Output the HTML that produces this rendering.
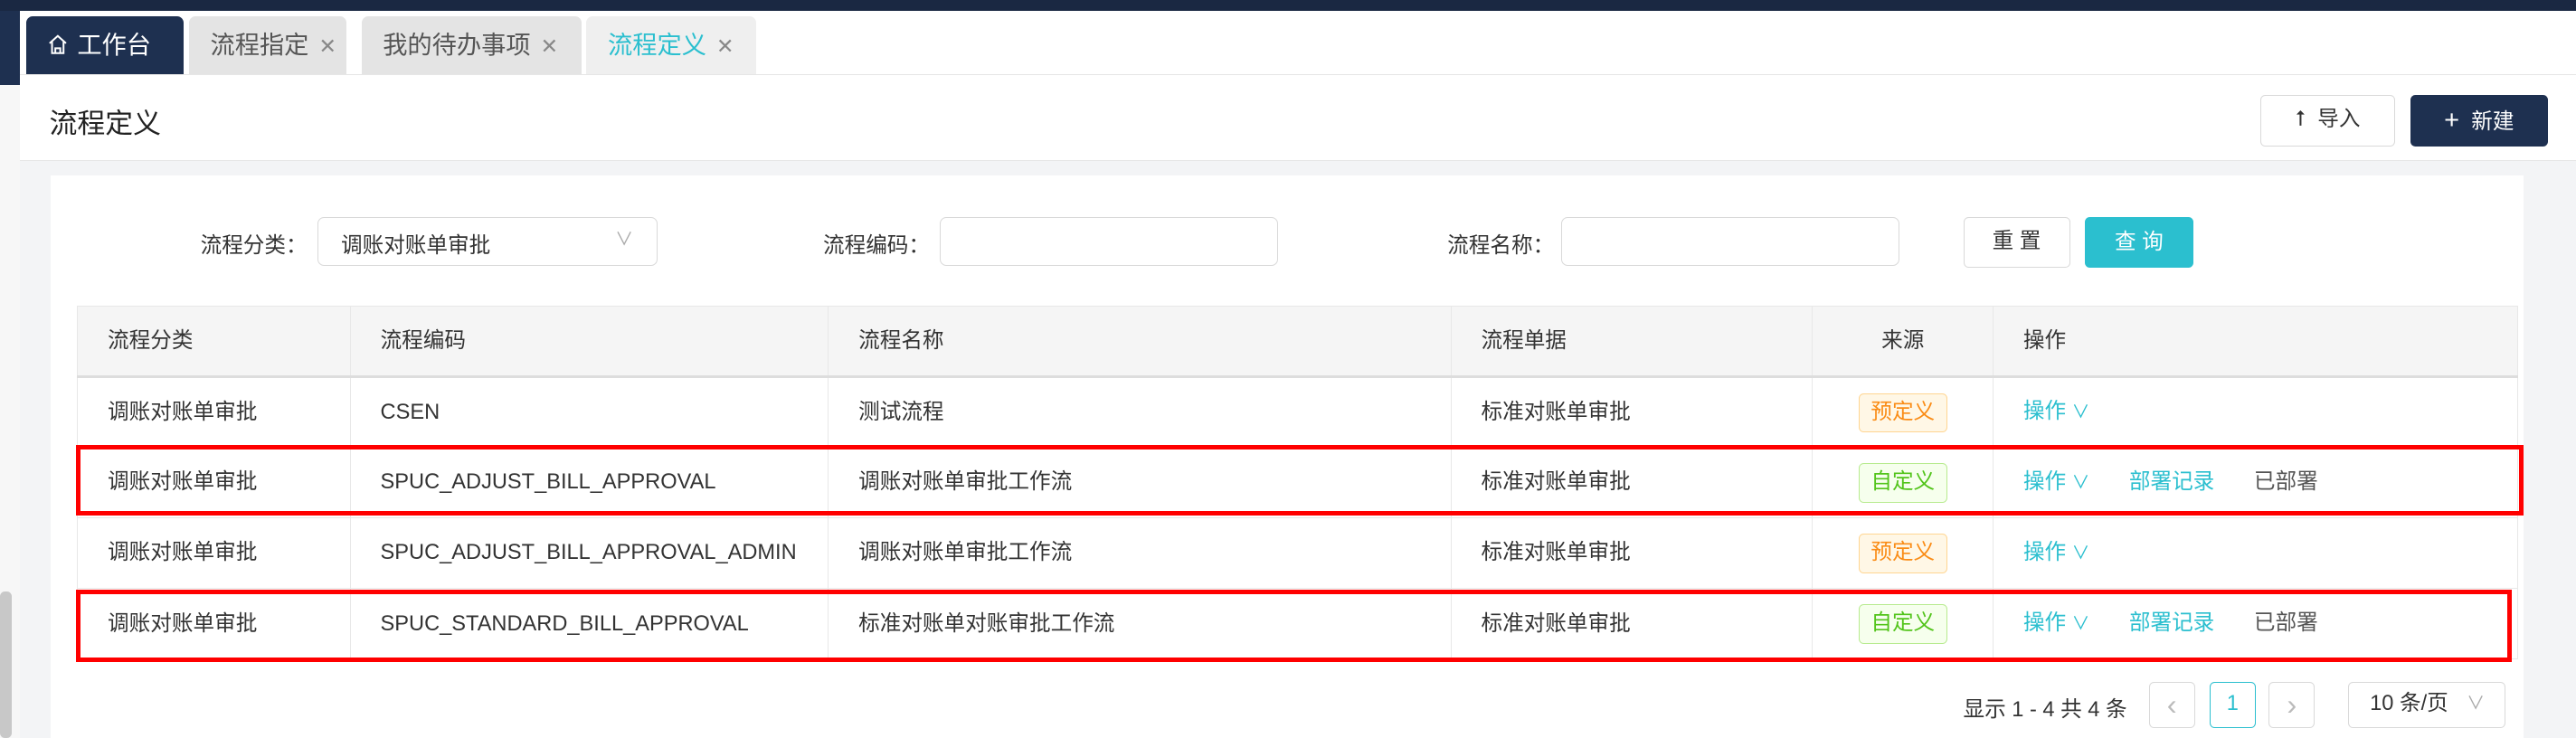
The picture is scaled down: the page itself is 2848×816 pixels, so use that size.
<!DOCTYPE html>
<html><head><meta charset="utf-8"><style>
*{box-sizing:border-box;margin:0;padding:0}
html,body{width:2848px;height:816px;overflow:hidden;background:#f3f4f6}
#w{zoom:1.81633;width:1568px;height:449.3px;position:relative;font-family:"Liberation Sans","Noto Sans CJK SC",sans-serif;font-size:13px;color:#333;background:#f3f4f6}
.a{position:absolute}
.tab{position:absolute;top:10px;height:35px;background:#e4e4e4;border-radius:4px 4px 0 0;font-size:15px;color:#555;line-height:35px;padding-left:13px}
.tab i{font-style:normal;color:#888;font-size:13px;margin-left:6px}
.btn{position:absolute;border:1px solid #d9d9d9;border-radius:3px;background:#fff;text-align:center;font-size:13px}
.lbl{position:absolute;top:139px;text-align:right;width:120px}
.inp{position:absolute;top:132px;height:30px;border:1px solid #d9d9d9;border-radius:4px;background:#fff}
table{position:absolute;left:47px;top:186px;width:1486px;border-collapse:collapse}
td,th{border:1px solid #e8e8e8;height:43px;line-height:41px;text-align:left;padding:0 0 0 18px;font-weight:normal;white-space:nowrap;vertical-align:middle}
th{background:#f5f5f5;border-bottom:2px solid #ddd}
.c{text-align:center;padding-left:0}
.tag{display:inline-block;border:1px solid;border-radius:3px;padding:0 7px;line-height:23px;font-size:13px;vertical-align:middle}
.pre{color:#fa8c16;background:#fff7e6;border-color:#ffd591}
.cus{color:#52c41a;background:#f6ffed;border-color:#b7eb8f}
.op{color:#2bbfcf}
.gr{color:#555}
.red{position:absolute;border:3px solid #f00}
.pg{position:absolute;top:415px;height:28px;border:1px solid #d9d9d9;border-radius:3px;background:#fff;text-align:center;line-height:26px;color:#bbb}
</style></head><body><div id="w">
<div class="a" style="left:0;top:0;width:1568px;height:6.5px;background:#1a2842"></div>
<div class="a" style="left:0;top:6.5px;width:12px;height:46px;background:#1e3050"></div>
<div class="a" style="left:0;top:52px;width:12px;height:400px;background:#f7f7f7"></div>
<div class="a" style="left:12px;top:6.5px;width:1556px;height:39px;background:#fff"></div>
<div class="tab" style="left:16px;width:96px;background:#1e3050;color:#fff"><svg width="12" height="13" viewBox="0 0 12 13" style="vertical-align:-1px;margin-right:6px"><path d="M1 6L6 1.5L11 6M2.5 5V12H9.5V5M4.5 12V9H7.5V12" fill="none" stroke="#fff" stroke-width="1.1"/></svg>工作台</div>
<div class="tab" style="left:115px;width:96px">流程指定<i>✕</i></div>
<div class="tab" style="left:220px;width:134px">我的待办事项<i>✕</i></div>
<div class="tab" style="left:357px;width:103px;background:#efefef;color:#2bbfcf">流程定义<i>✕</i></div>
<div class="a" style="left:12px;top:45px;width:1556px;height:53px;background:#fff;border-top:1px solid #e6e6e6;border-bottom:1px solid #e6e6e6"></div>
<div class="a" style="left:30px;top:61px;font-size:17px;color:#222">流程定义</div>
<div class="btn" style="left:1376px;top:58px;width:82px;height:31px;line-height:29px;color:#333"><span style="font-size:13px">⭡</span>&nbsp; 导入</div>
<div class="btn" style="left:1467px;top:58px;width:84px;height:31px;line-height:31px;background:#1e3050;border:none;color:#fff"><span style="font-size:16px">+</span>&nbsp; 新建</div>
<div class="a" style="left:31px;top:107px;width:1505px;height:345px;background:#fff"></div>
<div class="lbl" style="left:67px">流程分类：</div>
<div class="inp" style="left:193px;width:207px;padding:6px 14px">调账对账单审批<span style="position:absolute;right:14px;top:4px;color:#aaa;font-size:11px">∨</span></div>
<div class="lbl" style="left:446px">流程编码：</div>
<div class="inp" style="left:572px;width:206px"></div>
<div class="lbl" style="left:826px">流程名称：</div>
<div class="inp" style="left:950px;width:206px"></div>
<div class="btn" style="left:1195px;top:132px;width:65px;height:31px;line-height:29px">重 置</div>
<div class="btn" style="left:1269px;top:132px;width:66px;height:31px;line-height:31px;background:#2bbfcf;border:none;color:#fff">查 询</div>
<table>
<tr><th style="width:166px">流程分类</th><th style="width:291px">流程编码</th><th style="width:379px">流程名称</th><th style="width:220px">流程单据</th><th class="c" style="width:110px">来源</th><th>操作</th></tr>
<tr><td>调账对账单审批</td><td>CSEN</td><td>测试流程</td><td>标准对账单审批</td><td class="c"><span class="tag pre">预定义</span></td><td><span class="op">操作 <small>∨</small></span></td></tr>
<tr><td>调账对账单审批</td><td>SPUC_ADJUST_BILL_APPROVAL</td><td>调账对账单审批工作流</td><td>标准对账单审批</td><td class="c"><span class="tag cus">自定义</span></td><td><span class="op">操作 <small>∨</small></span><span class="op" style="margin-left:24px">部署记录</span><span class="gr" style="margin-left:24px">已部署</span></td></tr>
<tr><td>调账对账单审批</td><td>SPUC_ADJUST_BILL_APPROVAL_ADMIN</td><td>调账对账单审批工作流</td><td>标准对账单审批</td><td class="c"><span class="tag pre">预定义</span></td><td><span class="op">操作 <small>∨</small></span></td></tr>
<tr><td>调账对账单审批</td><td>SPUC_STANDARD_BILL_APPROVAL</td><td>标准对账单对账审批工作流</td><td>标准对账单审批</td><td class="c"><span class="tag cus">自定义</span></td><td><span class="op">操作 <small>∨</small></span><span class="op" style="margin-left:24px">部署记录</span><span class="gr" style="margin-left:24px">已部署</span></td></tr>
</table>
<div class="red" style="left:46px;top:271px;width:1490px;height:43px"></div>
<div class="red" style="left:46px;top:359px;width:1483px;height:44px"></div>
<div class="a" style="left:1195px;top:421px;color:#333">显示 1 - 4 共 4 条</div>
<div class="pg" style="left:1308px;width:28px;font-size:18px">‹</div>
<div class="pg" style="left:1345px;width:28px;border-color:#2bbfcf;color:#2bbfcf">1</div>
<div class="pg" style="left:1381px;width:28px;font-size:18px">›</div>
<div class="pg" style="left:1429px;width:96px;color:#333;text-align:left;padding-left:13px">10 条/页<span style="position:absolute;right:12px;color:#aaa;font-size:11px">∨</span></div>
<div class="a" style="left:0;top:360px;width:7px;height:89px;background:#c8c8c8;border-radius:3px"></div>
</div></body></html>
